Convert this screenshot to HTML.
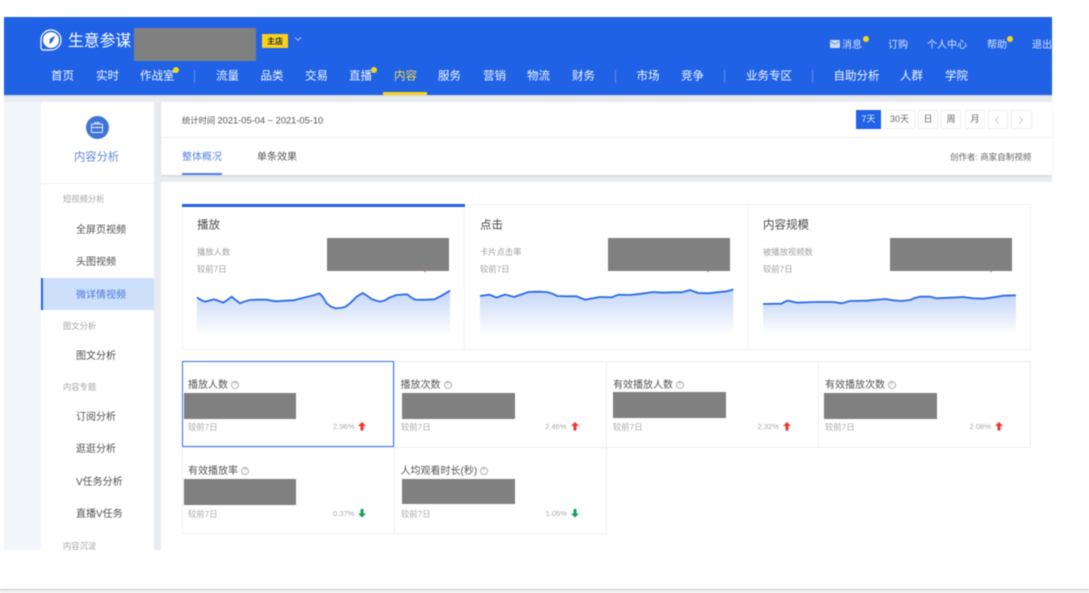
<!DOCTYPE html>
<html lang="zh">
<head>
<meta charset="utf-8">
<style>
html,body{margin:0;padding:0;background:#fff;width:1089px;height:593px;overflow:hidden}
body{font-family:"Liberation Sans","Noto Sans CJK SC",sans-serif;position:relative}
#w{position:absolute;left:0;top:0;width:1089px;height:593px;overflow:hidden;filter:blur(.45px)}
.b{position:absolute}
.t{position:absolute;white-space:nowrap;line-height:1;transform:translateY(-50%);margin-top:1px}
.g{position:absolute;background:#808080}
.n{font-size:11.5px;color:#f2f6ff;top:76px}
.s{font-size:10px;color:#d5e2fb;top:44.5px}
.d{position:absolute;width:6px;height:6px;border-radius:50%;background:#f8d21c}
.v{position:absolute;width:1px;height:13px;top:70px;background:#5f8deb}
.h{font-size:8.3px;color:#a5a5a5;left:63px}
.i{font-size:10px;color:#505050;left:76px}
.btn{position:absolute;top:110px;height:17px;border:1px solid #eeeeee;font-size:9px;line-height:17px;text-align:center;color:#666;background:#fff}
.ct{font-size:11.5px;color:#4a4a4a;top:225px}
.cs{font-size:8.3px;color:#a0a0a0;top:251px}
.cc{font-size:8.3px;color:#a0a0a0;top:268px}
.cell{position:absolute;width:211px;height:85px;border:1px solid #e9eff8;box-sizing:content-box}
.ml{font-size:10px;color:#555}
.mc{font-size:8.3px;color:#aaa}
.mp{font-size:7.6px;color:#aaa}
.q{position:absolute;width:6px;height:6px;border:1px solid #b0b0b0;border-radius:50%;font-size:5px;line-height:6px;text-align:center;color:#999;margin-top:1px}
svg{position:absolute;overflow:visible}
.m{position:absolute;width:2px;height:1px;background:#f08a70}
</style>
</head>
<body>
<div id="w">
<!-- page background -->
<div class="b" style="left:4px;top:17px;width:1048px;height:533px;background:#e8ebf1"></div>
<div class="b" style="left:4px;top:102px;width:37px;height:448px;background:#f2f5fa"></div>
<!-- header -->
<div class="b" style="left:4px;top:17px;width:1048px;height:78px;background:#2062e6;box-shadow:0 1px 2px rgba(0,0,0,.12)"></div>

<svg style="left:40px;top:29px" width="22" height="22" viewBox="0 0 22 22">
<path d="M1 11.5A10 10 0 1 1 11 21H3.5Q1 21 1 18.5Z" fill="#2062e6" stroke="#fff" stroke-width="1.2"/>
<circle cx="11" cy="11" r="7.9" fill="#fff"/>
<path d="M15.2 6.6L12.4 12.6L9.4 15.4L9.8 9.9Z" fill="#2062e6"/>
</svg>
<div class="t" style="left:68px;top:41px;font-size:15.8px;color:#fff;font-weight:400">生意参谋</div>
<div class="g" style="left:134px;top:28px;width:122px;height:33px"></div>
<div class="b" style="left:262px;top:33.5px;width:26px;height:14.5px;background:#f8d21c"></div>
<div class="t" style="left:267px;top:40.5px;font-size:8px;color:#333;font-weight:700">主店</div>
<svg style="left:294px;top:36px" width="8" height="6" viewBox="0 0 8 6"><path d="M1 1.5L4 4.2L7 1.5" fill="none" stroke="#a9c3f6" stroke-width="1"/></svg>

<svg style="left:829.5px;top:40px" width="10" height="8" viewBox="0 0 10 8"><rect width="10" height="8" rx="1" fill="#cfdffb"/><path d="M.5 1.2L5 4.4L9.5 1.2" fill="none" stroke="#2062e6" stroke-width=".6"/></svg>
<div class="t s" style="left:842px">消息</div><div class="d" style="left:863px;top:36px"></div>
<div class="t s" style="left:888px">订购</div>
<div class="t s" style="left:927px">个人中心</div>
<div class="t s" style="left:987px">帮助</div><div class="d" style="left:1007px;top:36px"></div>
<div class="b" style="left:1032px;top:36px;width:20px;height:18px;overflow:hidden"><div class="t s" style="left:0;top:9px">退出</div></div>

<div class="t n" style="left:51px">首页</div>
<div class="t n" style="left:96px">实时</div>
<div class="t n" style="left:140px">作战室</div><div class="d" style="left:173px;top:67px"></div>
<div class="v" style="left:194px"></div>
<div class="t n" style="left:216px">流量</div>
<div class="t n" style="left:260.5px">品类</div>
<div class="t n" style="left:305px">交易</div>
<div class="t n" style="left:349px">直播</div><div class="d" style="left:371px;top:67px"></div>
<div class="t n" style="left:394px;color:#f6d64a">内容</div>
<div class="b" style="left:383px;top:92px;width:44px;height:3px;background:#f8d21c"></div>
<div class="t n" style="left:438px">服务</div>
<div class="t n" style="left:483px">营销</div>
<div class="t n" style="left:527px">物流</div>
<div class="t n" style="left:572px">财务</div>
<div class="v" style="left:615px"></div>
<div class="t n" style="left:636.5px">市场</div>
<div class="t n" style="left:681px">竞争</div>
<div class="v" style="left:724px"></div>
<div class="t n" style="left:746px">业务专区</div>
<div class="v" style="left:812px"></div>
<div class="t n" style="left:833.5px">自助分析</div>
<div class="t n" style="left:900px">人群</div>
<div class="t n" style="left:945px">学院</div>

<!-- sidebar -->
<div class="b" style="left:41px;top:102px;width:113px;height:448px;background:#fff"></div>
<div class="b" style="left:85.5px;top:116px;width:23px;height:23px;border-radius:50%;background:#3f74d6"></div>
<svg style="left:90px;top:121px" width="14" height="13" viewBox="0 0 14 13"><rect x="1.5" y="3" width="11" height="8.5" rx="1" fill="none" stroke="#e6eefc" stroke-width="1"/><path d="M5 3V1.5H9V3M1.5 6.5H12.5M7 5.8V7.4" fill="none" stroke="#e6eefc" stroke-width="1"/></svg>
<div class="t" style="left:74px;top:157px;font-size:11.3px;color:#6388d8">内容分析</div>
<div class="b" style="left:41px;top:183px;width:113px;height:1px;background:#f1f1f3"></div>
<div class="t h" style="top:198px">短视频分析</div>
<div class="t i" style="top:229.5px">全屏页视频</div>
<div class="t i" style="top:261.5px">头图视频</div>
<div class="b" style="left:41px;top:278px;width:113px;height:32px;background:#cddff9"></div>
<div class="b" style="left:41px;top:278px;width:2px;height:32px;background:#2062e6"></div>
<div class="t i" style="top:294.5px;color:#4c78e0">微详情视频</div>
<div class="t h" style="top:325px">图文分析</div>
<div class="t i" style="top:355.5px">图文分析</div>
<div class="t h" style="top:386px">内容专题</div>
<div class="t i" style="top:417px">订阅分析</div>
<div class="t i" style="top:449px">逛逛分析</div>
<div class="t i" style="top:481.5px">V任务分析</div>
<div class="t i" style="top:513.5px">直播V任务</div>
<div class="b" style="left:41px;top:538px;width:113px;height:12px;overflow:hidden"><div class="t h" style="top:7px;left:22px">内容沉淀</div></div>

<!-- top panel -->
<div class="b" style="left:161px;top:102px;width:891px;height:73px;background:#fff;box-shadow:0 1px 2px rgba(0,0,0,.10)"></div>
<div class="t" style="left:182px;top:120px;font-size:8.3px;color:#555">统计时间 <span style="font-size:9.3px">2021-05-04 ~ 2021-05-10</span></div>
<div class="btn" style="left:856px;width:25px;background:#2062e6;color:#e8f0ff;border:0;height:19px;line-height:19px">7天</div>
<div class="btn" style="left:884.5px;width:28px">30天</div>
<div class="btn" style="left:918px;width:18px">日</div>
<div class="btn" style="left:941px;width:18px">周</div>
<div class="btn" style="left:965px;width:18px">月</div>
<div class="btn" style="left:988px;width:18px"></div>
<div class="btn" style="left:1011px;width:19px"></div>
<svg style="left:994px;top:115px" width="6" height="10" viewBox="0 0 6 10"><path d="M4.5 1.5L1.5 5L4.5 8.5" fill="none" stroke="#ccc" stroke-width="1"/></svg>
<svg style="left:1018px;top:115px" width="6" height="10" viewBox="0 0 6 10"><path d="M1.5 1.5L4.5 5L1.5 8.5" fill="none" stroke="#ccc" stroke-width="1"/></svg>
<div class="b" style="left:161px;top:137px;width:891px;height:1px;background:#f1f1f3"></div>
<div class="t" style="left:182px;top:157px;font-size:10px;color:#5b83de">整体概况</div>
<div class="b" style="left:182px;top:173px;width:40px;height:2px;background:#4f7fe8"></div>
<div class="t" style="left:257px;top:157px;font-size:10px;color:#555">单条效果</div>
<div class="t" style="left:950px;top:156px;font-size:8.5px;color:#666">创作者: 商家自制视频</div>

<!-- main panel -->
<div class="b" style="left:161px;top:182px;width:891px;height:368px;background:#fff"></div>

<!-- chart cards -->
<div class="b" style="left:182px;top:204px;width:847px;height:144px;border:1px solid #edf1f8;box-sizing:content-box"></div>
<div class="b" style="left:464px;top:204px;width:1px;height:146px;background:#edf1f8"></div>
<div class="b" style="left:748px;top:204px;width:1px;height:146px;background:#edf1f8"></div>
<div class="b" style="left:182px;top:204px;width:283px;height:3px;background:#2062e6"></div>

<div class="t ct" style="left:197px">播放</div>
<div class="t cs" style="left:197px">播放人数</div>
<div class="t cc" style="left:197px">较前7日</div>
<div class="m" style="left:424px;top:271px"></div>
<div class="g" style="left:327px;top:238px;width:122px;height:33px"></div>

<div class="t ct" style="left:480px">点击</div>
<div class="t cs" style="left:480px">卡片点击率</div>
<div class="t cc" style="left:480px">较前7日</div>
<div class="m" style="left:707px;top:271px"></div>
<div class="g" style="left:608px;top:238px;width:122px;height:33px"></div>

<div class="t ct" style="left:763px">内容规模</div>
<div class="t cs" style="left:763px">被播放视频数</div>
<div class="t cc" style="left:763px">较前7日</div>
<div class="m" style="left:990px;top:271px"></div>
<div class="g" style="left:890px;top:238px;width:122px;height:33px"></div>

<svg style="left:0;top:0" width="1089" height="593" viewBox="0 0 1089 593">
<defs><linearGradient id="f" x1="0" y1="0" x2="0" y2="1"><stop offset="0" stop-color="#c4d6f7"/><stop offset="1" stop-color="#ffffff"/></linearGradient></defs>
<g transform="translate(170 195) scale(.33333)">
<path d="M81 307L93 315L105 320L120 316L133 313L147 318L160 323L172 315L185 305L197 315L210 325L225 319L240 315L260 314L290 314L305 317L320 319L345 317L370 316L390 311L410 306L430 301L448 295L458 305L470 325L483 335L497 340L512 339L525 336L540 325L560 305L578 294L592 303L605 312L618 317L630 320L645 316L660 307L680 300L712 298L722 306L735 314L760 314.5L793 313L815 302L840 287V420H81Z" fill="url(#f)"/>
<path d="M81 307L93 315L105 320L120 316L133 313L147 318L160 323L172 315L185 305L197 315L210 325L225 319L240 315L260 314L290 314L305 317L320 319L345 317L370 316L390 311L410 306L430 301L448 295L458 305L470 325L483 335L497 340L512 339L525 336L540 325L560 305L578 294L592 303L605 312L618 317L630 320L645 316L660 307L680 300L712 298L722 306L735 314L760 314.5L793 313L815 302L840 287" fill="none" stroke="#2d6be6" stroke-width="5.5" stroke-linejoin="round"/>
</g>
<g transform="translate(460 195) scale(.33333)">
<path d="M60 303L88 299L98 303L110 308L122 303L135 299L148 302L162 306L185 298L205 291L235 290L260 291L275 295L292 303L320 304L350 304L362 309L375 314L398 310L420 306L455 307L475 299L510 300L545 296L580 291L610 293L640 292L665 292L690 285L703 290L715 294L745 295L770 292L800 289L820 283V420H60Z" fill="url(#f)"/>
<path d="M60 303L88 299L98 303L110 308L122 303L135 299L148 302L162 306L185 298L205 291L235 290L260 291L275 295L292 303L320 304L350 304L362 309L375 314L398 310L420 306L455 307L475 299L510 300L545 296L580 291L610 293L640 292L665 292L690 285L703 290L715 294L745 295L770 292L800 289L820 283" fill="none" stroke="#2d6be6" stroke-width="5.5" stroke-linejoin="round"/>
</g>
<g transform="translate(740 195) scale(.33333)">
<path d="M69 327L124 326L135 320L145 317L157 320L170 323L225 321L280 321L305 325L330 318L380 317L435 312L460 316L485 318L510 315L525 309L540 305L570 305L590 310L630 308L670 306L700 310L730 311L760 307L790 302L828 301V415H69Z" fill="url(#f)"/>
<path d="M69 327L124 326L135 320L145 317L157 320L170 323L225 321L280 321L305 325L330 318L380 317L435 312L460 316L485 318L510 315L525 309L540 305L570 305L590 310L630 308L670 306L700 310L730 311L760 307L790 302L828 301" fill="none" stroke="#2d6be6" stroke-width="5.5" stroke-linejoin="round"/>
</g>
</svg>

<!-- metric cells -->
<div class="cell" style="left:394px;top:361px"></div>
<div class="cell" style="left:606px;top:361px"></div>
<div class="cell" style="left:818px;top:361px"></div>
<div class="cell" style="left:182px;top:447px"></div>
<div class="cell" style="left:394px;top:447px"></div>
<div class="cell" style="left:182px;top:361px;border-color:#2f6ce6;width:209.5px;height:83.5px;border-width:1.5px"></div>

<div class="t ml" style="left:188px;top:384.5px">播放人数</div><div class="q" style="left:231px;top:380px">?</div>
<div class="g" style="left:184px;top:393px;width:112px;height:26px"></div>
<div class="t mc" style="left:188px;top:425.5px">较前7日</div>
<div class="t mp" style="left:333px;top:425.5px">2.96%</div>
<svg style="left:358px;top:422px" width="8" height="9" viewBox="0 0 8 9"><path d="M4 0L8 4H5.5V8.5H2.5V4H0Z" fill="#f5342c"/></svg>

<div class="t ml" style="left:400.5px;top:384.5px">播放次数</div><div class="q" style="left:443.5px;top:380px">?</div>
<div class="g" style="left:402px;top:393px;width:113px;height:26px"></div>
<div class="t mc" style="left:401px;top:425.5px">较前7日</div>
<div class="t mp" style="left:545px;top:425.5px">2.46%</div>
<svg style="left:571px;top:422px" width="8" height="9" viewBox="0 0 8 9"><path d="M4 0L8 4H5.5V8.5H2.5V4H0Z" fill="#f5342c"/></svg>

<div class="t ml" style="left:613px;top:384.5px">有效播放人数</div><div class="q" style="left:675.5px;top:380px">?</div>
<div class="g" style="left:613px;top:392px;width:113px;height:26px"></div>
<div class="t mc" style="left:613px;top:425.5px">较前7日</div>
<div class="t mp" style="left:757.5px;top:425.5px">2.32%</div>
<svg style="left:783px;top:422px" width="8" height="9" viewBox="0 0 8 9"><path d="M4 0L8 4H5.5V8.5H2.5V4H0Z" fill="#f5342c"/></svg>

<div class="t ml" style="left:825px;top:384.5px">有效播放次数</div><div class="q" style="left:887.5px;top:380px">?</div>
<div class="g" style="left:824px;top:393px;width:113px;height:26px"></div>
<div class="t mc" style="left:825px;top:425.5px">较前7日</div>
<div class="t mp" style="left:969.5px;top:425.5px">2.08%</div>
<svg style="left:995px;top:422px" width="8" height="9" viewBox="0 0 8 9"><path d="M4 0L8 4H5.5V8.5H2.5V4H0Z" fill="#f5342c"/></svg>

<div class="t ml" style="left:188px;top:470.5px">有效播放率</div><div class="q" style="left:241px;top:466px">?</div>
<div class="g" style="left:184px;top:479px;width:112px;height:26px"></div>
<div class="t mc" style="left:188px;top:512.5px">较前7日</div>
<div class="t mp" style="left:333px;top:512.5px">0.37%</div>
<svg style="left:358px;top:509px" width="8" height="9" viewBox="0 0 8 9"><path d="M4 8.5L8 4.5H5.5V0H2.5V4.5H0Z" fill="#18a058"/></svg>

<div class="t ml" style="left:400.5px;top:470.5px">人均观看时长(秒)</div><div class="q" style="left:479.5px;top:466px">?</div>
<div class="g" style="left:402px;top:479px;width:113px;height:25px"></div>
<div class="t mc" style="left:401px;top:512.5px">较前7日</div>
<div class="t mp" style="left:545.5px;top:512.5px">1.05%</div>
<svg style="left:571px;top:509px" width="8" height="9" viewBox="0 0 8 9"><path d="M4 8.5L8 4.5H5.5V0H2.5V4.5H0Z" fill="#18a058"/></svg>

<!-- bottom bar -->
<div class="b" style="left:0;top:589px;width:1089px;height:1px;background:#c9c9c9"></div>
<div class="b" style="left:0;top:590px;width:1089px;height:3px;background:#f0f0f0"></div>
</div>
</body>
</html>
